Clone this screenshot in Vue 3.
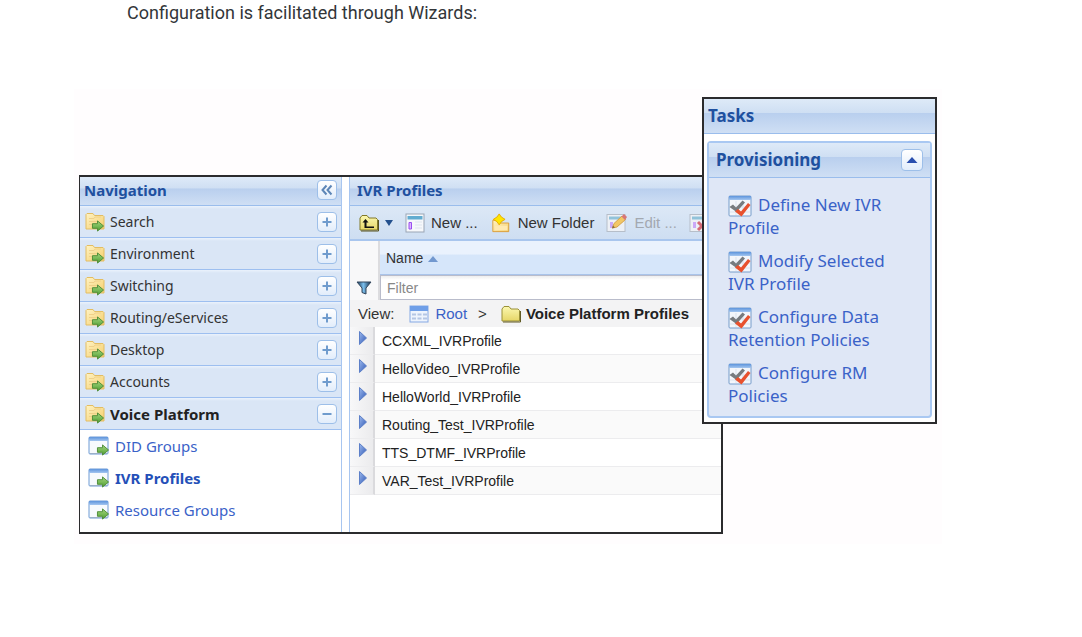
<script setup>
import { ref } from 'vue'

const sections = [
  { name: 'Search' },
  { name: 'Environment' },
  { name: 'Switching' },
  { name: 'Routing/eServices' },
  { name: 'Desktop' },
  { name: 'Accounts' },
  { name: 'Voice Platform', open: true }
]
const links = [
  { name: 'DID Groups' },
  { name: 'IVR Profiles', current: true },
  { name: 'Resource Groups' }
]
const profiles = [
  'CCXML_IVRProfile',
  'HelloVideo_IVRProfile',
  'HelloWorld_IVRProfile',
  'Routing_Test_IVRProfile',
  'TTS_DTMF_IVRProfile',
  'VAR_Test_IVRProfile'
]
const tasks = [
  'Define New IVR Profile',
  'Modify Selected IVR Profile',
  'Configure Data Retention Policies',
  'Configure RM Policies'
]
const filter = ref('')
</script>

<template>
  <svg class="defs" aria-hidden="true">
    <defs>
      <linearGradient id="gold" x1="0" y1="0" x2="1" y2="1">
        <stop offset="0" stop-color="#fff3c4" /><stop offset="1" stop-color="#f5cf6d" />
      </linearGradient>
      <linearGradient id="olive" x1="0" y1="0" x2="0" y2="1">
        <stop offset="0" stop-color="#fbf8b0" /><stop offset="1" stop-color="#e6d667" />
      </linearGradient>
      <linearGradient id="green" x1="0" y1="0" x2="0" y2="1">
        <stop offset="0" stop-color="#a5d77f" /><stop offset="1" stop-color="#4f9e32" />
      </linearGradient>
      <linearGradient id="bluebar" x1="0" y1="0" x2="0" y2="1">
        <stop offset="0" stop-color="#5d94dc" /><stop offset="1" stop-color="#a4c6f0" />
      </linearGradient>
      <linearGradient id="funnel" x1="0" y1="0" x2="1" y2="0">
        <stop offset="0" stop-color="#16314f" /><stop offset=".45" stop-color="#7cc0ee" /><stop offset="1" stop-color="#132a45" />
      </linearGradient>
      <linearGradient id="play" x1="0" y1="0" x2="1" y2="1">
        <stop offset="0" stop-color="#9db9ee" /><stop offset="1" stop-color="#2e58b4" />
      </linearGradient>
      <symbol id="arrow" viewBox="0 0 14 13">
        <path d="M1 4h5.500V1L13 6.500 6.500 12V9H1z" fill="url(#green)" stroke="#4a8a35" stroke-linejoin="round" />
      </symbol>
      <symbol id="i-folder" viewBox="0 0 20 20">
        <path d="M1 17V2.500L2 1.500H8L9.500 3.500H18L19 4.500V17z" fill="url(#gold)" stroke="#e3bd62" />
        <path d="M4 6.500h5l1-1.500h6M4 9.500h9M4 12.500h6" fill="none" stroke="#efd08a" />
        <use href="#arrow" x="6" y="8" width="14" height="12" />
      </symbol>
      <symbol id="i-window" viewBox="0 0 22 20">
        <rect x="1" y="1" width="19" height="17" rx="1" fill="#f7fafd" stroke="#6f9bd4" />
        <path d="M1 1h19v4H1z" fill="url(#bluebar)" />
        <path d="M2 17.500h17" stroke="#9aafc9" />
        <use href="#arrow" x="8" y="8" width="14" height="12" />
      </symbol>
      <symbol id="i-up" viewBox="0 0 20 18">
        <path d="M1 16V4L3 1.500H8L10 4H17L18.500 5.500V16z" fill="url(#olive)" stroke="#817828" />
        <path d="M2 17h17.500V6" fill="none" stroke="#57511f" />
        <path d="M3.500 8.500L6.500 5 9.500 8.500H7.500V12.500H15V14H5.500V8.500z" fill="#111" />
      </symbol>
      <symbol id="i-form" viewBox="0 0 20 20">
        <rect x="1" y="1" width="18" height="18" fill="#f6f8fb" stroke="#9aa5b5" />
        <path d="M2.500 3h15v3.500h-15z" fill="#62acd0" />
        <path d="M4 9.500h2.500v6.500H4z" fill="#dcb5ff" stroke="#9a4ff0" />
        <path d="M10 9h7M10 12h7M10 15h7" stroke="#dde4ee" />
      </symbol>
      <symbol id="i-newfolder" viewBox="0 0 20 22">
        <path d="M1 20.500V8h6l2 3h9.500v9.500z" fill="url(#gold)" stroke="#d99b35" />
        <path d="M3 14h14v5H3z" fill="#ffe9b1" />
        <path d="M8 1L10.500 4.500 14.500 7 10.500 9.500 8 13 5.500 9.500 1.500 7 5.500 4.500z" fill="#ffe600" stroke="#e6a900" />
      </symbol>
      <symbol id="i-edit" viewBox="0 0 22 20">
        <rect x="1" y="1.500" width="18" height="17" fill="#edf0f5" stroke="#b6bec9" />
        <path d="M3 3.500h14v3H3z" fill="#91c3da" />
        <path d="M4 9h3v6H4z" fill="#caa9f7" />
        <path d="M6.500 15L8 10.500 16 3 19.500 6.500 11 14z" fill="#f2c765" stroke="#d6a24c" />
        <path d="M15.500 3.500L18 1 21 4 19 7z" fill="#d77777" />
        <path d="M6 15.500L7 12.500 9 14.500z" fill="#866b43" />
      </symbol>
      <symbol id="i-delete" viewBox="0 0 22 20">
        <rect x="1" y="1.500" width="18" height="17" fill="#edf0f5" stroke="#b6bec9" />
        <path d="M3 3.500h14v3H3z" fill="#91c3da" />
        <path d="M4 9h3v6H4z" fill="#caa9f7" />
        <path d="M9 9l8 8M17 9l-8 8" stroke="#d46b76" stroke-width="3" />
      </symbol>
      <symbol id="i-funnel" viewBox="0 0 16 14">
        <path d="M1 1H15L10 7V13L6 11.500V7z" fill="url(#funnel)" stroke="#33465c" stroke-linejoin="round" />
      </symbol>
      <symbol id="i-grid" viewBox="0 0 20 18">
        <rect x="1" y="1" width="18" height="16" fill="#eef4fd" stroke="#86a9e3" />
        <path d="M1 1h18v5H1z" fill="#6f9fe8" />
        <path d="M3 9.500h4M8.500 9.500h4M14 9.500h4M3 13.500h4M8.500 13.500h4M14 13.500h4" stroke="#b4c6e4" stroke-width="2" />
      </symbol>
      <symbol id="i-plainfolder" viewBox="0 0 20 18">
        <path d="M1 16V4L3 1.500H8L10 4H17L18.500 5.500V16z" fill="url(#olive)" stroke="#9a9037" />
        <path d="M2 17h17.500V6" fill="none" stroke="#625b24" />
      </symbol>
      <symbol id="i-check" viewBox="0 0 24 22">
        <rect x="1" y="1" width="22" height="20" rx="1" fill="#f3f6fb" stroke="#779dca" />
        <path d="M1 1h22v4H1z" fill="url(#bluebar)" />
        <path d="M2 12h20M2 17h20M8 6v14M15 6v14" stroke="#dce3ed" />
        <path d="M1.500 12L5 9.500 8 12.500 14.500 5.500 17 7.500 8.500 17z" fill="#777b7f" />
        <path d="M7 16.500L10 14 13 16.500 20 8 22.500 10 13.500 21.500z" fill="#e8512e" />
      </symbol>
    </defs>
  </svg>

  <main class="page">
    <p class="intro">Configuration is facilitated through Wizards:</p>

    <div class="figure">
      <div class="window">
        <nav class="nav" aria-label="Navigation">
          <header class="bar">
            <h2>Navigation</h2>
            <button class="tool" aria-label="Collapse navigation">
              <svg viewBox="0 0 18 18"><path d="M8.500 4.500L4.500 9l4 4.500M13.500 4.500L9.500 9l4 4.500" fill="none" stroke="#5d86b7" stroke-width="2" /></svg>
            </button>
          </header>
          <div v-for="s in sections" :key="s.name" class="section" :class="{ open: s.open }">
            <svg class="ico20"><use href="#i-folder" /></svg>
            <span>{{ s.name }}</span>
            <button class="tool" :aria-label="'Toggle ' + s.name" :aria-expanded="!!s.open">
              <svg viewBox="0 0 18 18"><path :d="s.open ? 'M4.500 9h9' : 'M4.500 9h9M9 4.500v9'" fill="none" stroke="#6f9bcd" stroke-width="2" /></svg>
            </button>
          </div>
          <a v-for="l in links" :key="l.name" href="#" class="sublink" :class="{ current: l.current }">
            <svg class="ico22"><use href="#i-window" /></svg>
            <span>{{ l.name }}</span>
          </a>
        </nav>

        <section class="content">
          <header class="bar"><h2>IVR Profiles</h2></header>
          <div class="toolbar">
            <button class="up" aria-label="Up one level">
              <svg class="ico20"><use href="#i-up" /></svg>
              <svg class="caret" viewBox="0 0 8 6"><path d="M0 0h8L4 6z" fill="#23508e" /></svg>
            </button>
            <button><svg class="ico20"><use href="#i-form" /></svg>New ...</button>
            <button><svg class="ico22"><use href="#i-newfolder" /></svg>New Folder</button>
            <button disabled><svg class="ico22"><use href="#i-edit" /></svg>Edit ...</button>
            <button disabled aria-label="Delete"><svg class="ico22"><use href="#i-delete" /></svg></button>
          </div>
          <table>
            <colgroup><col class="c-gutter" /><col class="c-step" /><col /></colgroup>
            <thead>
              <tr class="names">
                <td colspan="2" class="edge"></td>
                <th scope="col">Name <svg class="sort" viewBox="0 0 10 6"><path d="M0 6h10L5 0z" fill="#7298cf" /></svg></th>
              </tr>
              <tr class="filters">
                <td colspan="2" class="edge"><svg class="funnel"><use href="#i-funnel" /></svg></td>
                <td><input v-model="filter" type="text" placeholder="Filter" aria-label="Filter by name" /></td>
              </tr>
              <tr class="view">
                <td colspan="3">
                  <div class="crumbs">
                    <span class="label">View:</span>
                    <svg class="ico20"><use href="#i-grid" /></svg>
                    <a href="#">Root</a>
                    <span class="sep">&gt;</span>
                    <svg class="ico20"><use href="#i-plainfolder" /></svg>
                    <strong>Voice Platform Profiles</strong>
                  </div>
                </td>
              </tr>
            </thead>
            <tbody>
              <tr v-for="p in profiles" :key="p">
                <td class="gutter"><svg class="play" viewBox="0 0 8 14"><path d="M.5 .5L7.500 7 .5 13.500z" fill="url(#play)" stroke="#5c7fc8" /></svg></td>
                <td colspan="2" class="name">{{ p }}</td>
              </tr>
            </tbody>
          </table>
        </section>
      </div>

      <aside class="tasks">
        <header class="bar"><h2>Tasks</h2></header>
        <section class="group">
          <header class="bar">
            <h3>Provisioning</h3>
            <button class="tool" aria-label="Collapse Provisioning">
              <svg viewBox="0 0 20 20"><path d="M4.500 13h11L10 7z" fill="#2a4fae" /></svg>
            </button>
          </header>
          <ul>
            <li v-for="t in tasks" :key="t">
              <a href="#"><svg class="check"><use href="#i-check" /></svg>{{ t }}</a>
            </li>
          </ul>
        </section>
      </aside>
    </div>
  </main>
</template>

<style>
body {
  background: #fff;
}
</style>

<style scoped>
* {
  box-sizing: border-box;
}
.defs {
  position: absolute;
  width: 0;
  height: 0;
}
.page {
  overflow: hidden;
}
.intro {
  margin: 0 0 63px 127px;
  font: 18px/26px Roboto, sans-serif;
  color: #333639;
}
h2,
h3 {
  margin: 0;
  font: bold 15px/20px "Noto Sans", sans-serif;
  color: #20509f;
}
button {
  padding: 0;
  border: 0;
  background: none;
  font: inherit;
  color: inherit;
}
a {
  color: #3a62c8;
  text-decoration: none;
}
svg {
  flex: none;
}
.ico20 {
  width: 20px;
  height: 20px;
}
.ico22 {
  width: 22px;
  height: 20px;
}
.figure {
  position: relative;
  margin: 0 140px 0 74px;
  padding: 86px 219px 10px 5px;
  background: #fffdfe;
}
.window {
  display: flex;
  gap: 7px;
  border: 2px solid #2b2b2d;
  border-width: 2px 2px 2px 1px;
  background: #fff;
  font: 14px/20px "Noto Sans", sans-serif;
  color: #333;
}
.bar {
  display: flex;
  align-items: center;
  justify-content: space-between;
  height: 29px;
  padding: 0 4px 2px;
  border-bottom: 1px solid #9abdec;
  background: linear-gradient(#deeaf8, #cfdff3 40%, #b9cfee 42%, #cfdff4);
}
.nav {
  flex: none;
  width: 262px;
  border-right: 1px solid #a8c6f0;
  padding-bottom: 6px;
}
.tool {
  width: 20px;
  height: 20px;
  border: 1px solid #9dbfe9;
  border-radius: 4px;
  background: linear-gradient(#fff, #e2edfb);
}
.tool svg {
  display: block;
  width: 18px;
  height: 18px;
}
.section {
  display: flex;
  align-items: center;
  gap: 5px;
  height: 32px;
  padding: 0 4px 0 5px;
  border-bottom: 1px solid #9dbff0;
  background: linear-gradient(#eaf2fc, #dae6f6 3px);
}
.section .tool {
  margin-left: auto;
}
.open span {
  font-weight: bold;
  font-size: 15px;
  color: #222;
}
.sublink {
  display: flex;
  align-items: center;
  gap: 5px;
  height: 32px;
  padding-left: 8px;
  font-size: 15px;
}
.current {
  font-weight: bold;
  color: #2450b8;
}
.content {
  flex: 1;
  min-width: 0;
  border-left: 1px solid #a8c6f0;
  font: 14px/20px "Liberation Sans", Arial, sans-serif;
}
.content .bar {
  padding-left: 7px;
}
.toolbar {
  display: flex;
  align-items: center;
  gap: 12px;
  height: 35px;
  padding-left: 9px;
  overflow: hidden;
  white-space: nowrap;
  border-bottom: 2px solid #a9c6ee;
  background: linear-gradient(#dce8f6, #cedef2);
  font-size: 15px;
}
.toolbar button {
  display: flex;
  flex: none;
  align-items: center;
  gap: 6px;
}
.toolbar button:disabled {
  color: #a3a8b0;
}
.caret {
  width: 8px;
  height: 6px;
}
table {
  width: 100%;
  table-layout: fixed;
  border-collapse: separate;
  border-spacing: 0;
}
.c-gutter {
  width: 25px;
}
.c-step {
  width: 5px;
}
td,
th {
  padding: 0;
}
.edge {
  border-right: 2px solid #dcdcdf;
  background: #f8f8f9;
}
.names th {
  height: 34px;
  padding-left: 6px;
  border-bottom: 1px solid #a9c4ea;
  text-align: left;
  font-weight: normal;
  background: linear-gradient(#eaf2fd 40%, #d6e6fa 42%);
}
.sort {
  width: 10px;
  height: 6px;
  margin: 0 0 1px 1px;
}
.filters td {
  height: 25px;
  line-height: 0;
}
.funnel {
  width: 16px;
  height: 14px;
  margin-left: 6px;
}
input {
  display: block;
  width: 100%;
  height: 25px;
  padding: 0 6px;
  border: 1px solid #b9bccb;
  border-width: 1px 0 1px 1px;
  background: linear-gradient(#eee, #fff 4px);
  font: inherit;
  line-height: 20px;
}
input::placeholder {
  color: #888;
  opacity: 1;
}
.crumbs {
  display: flex;
  align-items: center;
  height: 27px;
  padding-left: 8px;
  background: #f3f3f4;
  white-space: nowrap;
  font-size: 15px;
}
.crumbs .label {
  margin-right: 15px;
}
.crumbs a {
  margin-left: 6px;
}
.crumbs .sep {
  margin: 0 14px 0 11px;
}
.crumbs strong {
  margin-left: 5px;
  color: #222;
}
tbody td {
  height: 28px;
  border-bottom: 1px solid #ececee;
}
tbody tr:nth-child(even) .name {
  background: #fafafa;
}
.gutter {
  border-right: 2px solid #dadadd;
  background: linear-gradient(90deg, #f8f8f9, #ebebed);
}
.name {
  padding-left: 7px;
  color: #222;
}
.play {
  display: block;
  width: 8px;
  height: 14px;
  margin: 0 0 5px 9px;
}
.tasks {
  position: absolute;
  top: 8px;
  right: 5px;
  width: 235px;
  padding-bottom: 4px;
  border: 2px solid #2b2b2d;
  background: #fff;
}
.tasks h2,
.tasks h3 {
  font-size: 17px;
}
.tasks .bar {
  height: 35px;
  padding: 0 7px 0 4px;
}
.group {
  margin: 7px 3px 0;
  border: 2px solid #a9c8f2;
  border-radius: 4px;
  background: #dfe7f6;
}
.tasks .group .bar {
  padding-left: 7px;
}
.group .tool {
  width: 22px;
  height: 22px;
}
.group .tool svg {
  width: 20px;
  height: 20px;
}
ul {
  display: grid;
  gap: 10px;
  margin: 0;
  padding: 15px 24px 9px 19px;
  list-style: none;
  font: 17px/23px "Noto Sans", sans-serif;
}
li a {
  display: block;
}
.check {
  width: 24px;
  height: 22px;
  margin: 0 6px -6px 0;
  vertical-align: baseline;
}
</style>
